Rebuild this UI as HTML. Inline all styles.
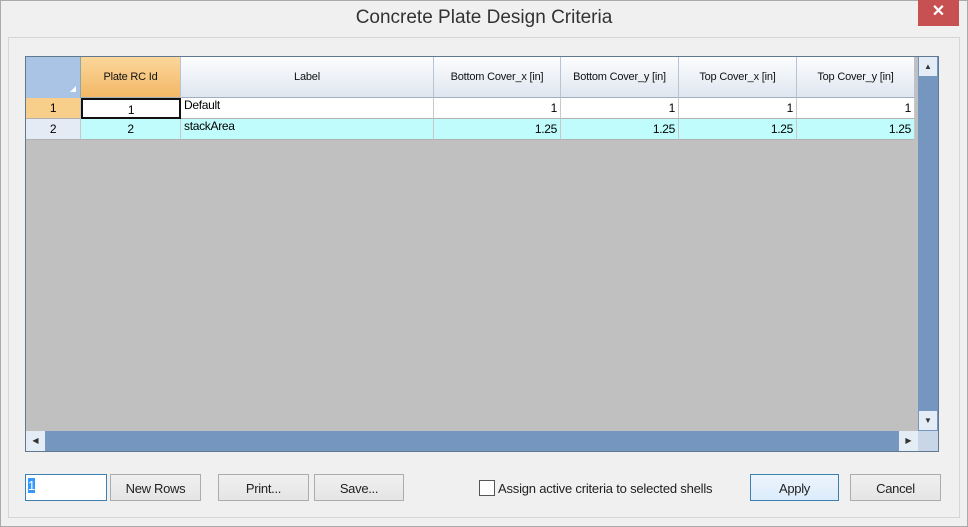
<!DOCTYPE html><html><head><style>
body{margin:0;width:968px;height:527px;background:#fff;font-family:"Liberation Sans",sans-serif;position:relative;overflow:hidden}
.a{position:absolute;box-sizing:border-box}
.win{left:0;top:0;width:968px;height:527px;border:1px solid #aaa;background:#f0f0f0}
.hd{background:linear-gradient(#fdfdfe,#dfe6f0);border-right:1px solid #b8c4d4;border-bottom:1px solid #a0aec0;font-size:11px;text-align:center;line-height:40px;color:#111;top:57px;height:41px;letter-spacing:-0.2px}
.c{font-size:12px;border-right:1px solid #c8c8c8;border-bottom:1px solid #b0b0b0;height:21px;line-height:20px;padding:0 3px;letter-spacing:-0.3px}
.r{text-align:right}
.btn{border:1px solid #acacac;background:linear-gradient(#f0f0f0,#e5e5e5);font-size:13px;text-align:center;line-height:27px;height:27px;top:474px;color:#222;letter-spacing:-0.3px}
</style></head><body>
<div class="a win"></div>
<div class="a" style="left:0;top:7px;width:968px;text-align:center;font-size:19px;color:#333">Concrete Plate Design Criteria</div>
<div class="a" style="left:918px;top:0;width:41px;height:26px;background:#c75050;color:#fff;text-align:center;font-size:16px;line-height:24px;font-weight:bold">✕</div>
<div class="a" style="left:8px;top:37px;width:952px;height:481px;border:1px solid #d6d6d6;background:#f0f0f0"></div>
<div class="a" style="left:25px;top:56px;width:914px;height:396px;border:1px solid #607890;background:#c0c0c0"></div>
<div class="a" style="left:26px;top:57px;width:55px;height:41px;background:#a9c4e4;border-right:1px solid #8aa"></div>
<div class="a" style="left:70px;top:86px;width:0;height:0;border-left:6px solid transparent;border-bottom:6px solid #fff"></div>
<div class="a hd" style="left:81px;width:100px;background:linear-gradient(#fbd69a,#f3b867)">Plate RC Id</div>
<div class="a hd" style="left:181px;width:253px">Label</div>
<div class="a hd" style="left:434px;width:127px">Bottom Cover_x [in]</div>
<div class="a hd" style="left:561px;width:118px">Bottom Cover_y [in]</div>
<div class="a hd" style="left:679px;width:118px">Top Cover_x [in]</div>
<div class="a hd" style="left:797px;width:118px">Top Cover_y [in]</div>
<div class="a c" style="left:26px;top:98px;width:55px;background:#f8cf8a;text-align:center">1</div>
<div class="a c" style="left:81px;top:98px;width:100px;background:#fff;text-align:center;border:2px solid #111">1</div>
<div class="a c" style="left:181px;top:98px;width:253px;background:#fff;line-height:14px">Default</div>
<div class="a c r" style="left:434px;top:98px;width:127px;background:#fff">1</div>
<div class="a c r" style="left:561px;top:98px;width:118px;background:#fff">1</div>
<div class="a c r" style="left:679px;top:98px;width:118px;background:#fff">1</div>
<div class="a c r" style="left:797px;top:98px;width:118px;background:#fff">1</div>
<div class="a c" style="left:26px;top:119px;width:55px;background:#e4ebf5;text-align:center">2</div>
<div class="a c" style="left:81px;top:119px;width:100px;background:#c0fcfc;text-align:center">2</div>
<div class="a c" style="left:181px;top:119px;width:253px;background:#c0fcfc;line-height:14px">stackArea</div>
<div class="a c r" style="left:434px;top:119px;width:127px;background:#c0fcfc">1.25</div>
<div class="a c r" style="left:561px;top:119px;width:118px;background:#c0fcfc">1.25</div>
<div class="a c r" style="left:679px;top:119px;width:118px;background:#c0fcfc">1.25</div>
<div class="a c r" style="left:797px;top:119px;width:118px;background:#c0fcfc">1.25</div>
<div class="a" style="left:918px;top:57px;width:20px;height:374px;background:#7597bf"></div>
<div class="a" style="left:919px;top:57px;width:18px;height:19px;background:#e4ecf6;font-size:8px;text-align:center;line-height:19px;color:#333">▲</div>
<div class="a" style="left:919px;top:411px;width:18px;height:19px;background:#e4ecf6;font-size:8px;text-align:center;line-height:19px;color:#333">▼</div>
<div class="a" style="left:26px;top:431px;width:892px;height:20px;background:#7597bf"></div>
<div class="a" style="left:26px;top:431px;width:19px;height:20px;background:#e4ecf6;font-size:8px;text-align:center;line-height:20px;color:#333">◀</div>
<div class="a" style="left:899px;top:431px;width:19px;height:20px;background:#e4ecf6;font-size:8px;text-align:center;line-height:20px;color:#333">▶</div>
<div class="a" style="left:918px;top:431px;width:20px;height:20px;background:#c8d6e8"></div>
<div class="a" style="left:25px;top:474px;width:82px;height:27px;border:1px solid #3c7fb1;background:#fff;font-size:13px;padding:3px 2px"><span style="background:#3399ff;color:#fff">1</span></div>
<div class="a btn" style="left:110px;width:91px">New Rows</div>
<div class="a btn" style="left:218px;width:91px">Print...</div>
<div class="a btn" style="left:314px;width:90px">Save...</div>
<div class="a" style="left:479px;top:480px;width:16px;height:16px;border:1px solid #555;background:#fff"></div>
<div class="a" style="left:498px;top:481px;font-size:13px;color:#222;letter-spacing:-0.2px">Assign active criteria to selected shells</div>
<div class="a btn" style="left:750px;width:89px;border-color:#3c7fb1;background:linear-gradient(#ecf4fc,#dcecfc)">Apply</div>
<div class="a btn" style="left:850px;width:91px">Cancel</div>
</body></html>
